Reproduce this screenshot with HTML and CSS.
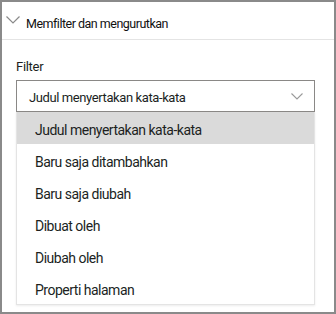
FILE: index.html
```html
<!DOCTYPE html>
<html lang="id">
<head>
  <meta charset="UTF-8" />
  <title>Memfilter dan mengurutkan</title>
  <link rel="stylesheet" href="styles.css">
</head>
<body>

  <!-- Filter panel -->
  <div class="panel">
    <div class="panel-header">
      <svg class="header-chevron" width="14" height="8" viewBox="0 0 14 8">
        <polyline points="0.5,0.5 7,7 13.5,0.5" fill="none" stroke="#8a8a8a" stroke-width="1.2" />
      </svg>
      <span>Memfilter dan mengurutkan</span>
    </div>

    <div class="panel-body">
      <div class="field-label">Filter</div>

      <div class="dropdown">
        <span>Judul menyertakan kata-kata</span>
        <svg class="dropdown-chevron" width="12" height="7" viewBox="0 0 12 7">
          <polyline points="0.5,0.5 6,6 11.5,0.5" fill="none" stroke="#9a9a9a" stroke-width="1.1" />
        </svg>
      </div>

      <ul class="menu">
        <li class="selected">Judul menyertakan kata-kata</li>
        <li>Baru saja ditambahkan</li>
        <li>Baru saja diubah</li>
        <li>Dibuat oleh</li>
        <li>Diubah oleh</li>
        <li>Properti halaman</li>
      </ul>
    </div>
  </div>

</body>
</html>
```

FILE: styles.css
```css
body {
  margin: 0;
  font-family: Roboto, "Noto Sans", sans-serif;
  font-size: 13px;
  color: #201f1e;
  background: #fff;
}

.panel {
  box-sizing: border-box;
  width: 336px;
  height: 314px;
  border: 2px solid #8a8a8a;
  background: #fff;
}

.panel-header {
  box-sizing: border-box;
  display: flex;
  align-items: center;
  height: 38px;
  padding-top: 5px;
  border-bottom: 1px solid #e4e4e4;
  font-size: 12.5px;
  letter-spacing: -0.5px;
  color: #111;
}

.header-chevron {
  margin-left: 4px;
  margin-right: 6px;
  margin-top: -6px;
}

.panel-body {
  padding: 17px 19px 0 14px;
}

.field-label {
  line-height: 20px;
  margin-bottom: 3px;
  letter-spacing: -0.3px;
}

.dropdown {
  box-sizing: border-box;
  display: flex;
  align-items: center;
  justify-content: space-between;
  height: 32px;
  padding: 3px 11px 0 12px;
  border: 1px solid #8a8886;
  letter-spacing: -0.4px;
}

.dropdown-chevron {
  margin-top: -2px;
}

.menu {
  list-style: none;
  margin: 0;
  padding: 0;
  border: 1px solid #e4e4e4;
  border-top: none;
  box-shadow: 0 1px 2px rgba(0, 0, 0, 0.08);
  font-size: 14px;
  letter-spacing: -0.5px;
}

.menu li {
  box-sizing: border-box;
  height: 32px;
  padding: 4px 0 0 18px;
  line-height: 28px;
}

.menu li.selected {
  background: #dadada;
}
```
